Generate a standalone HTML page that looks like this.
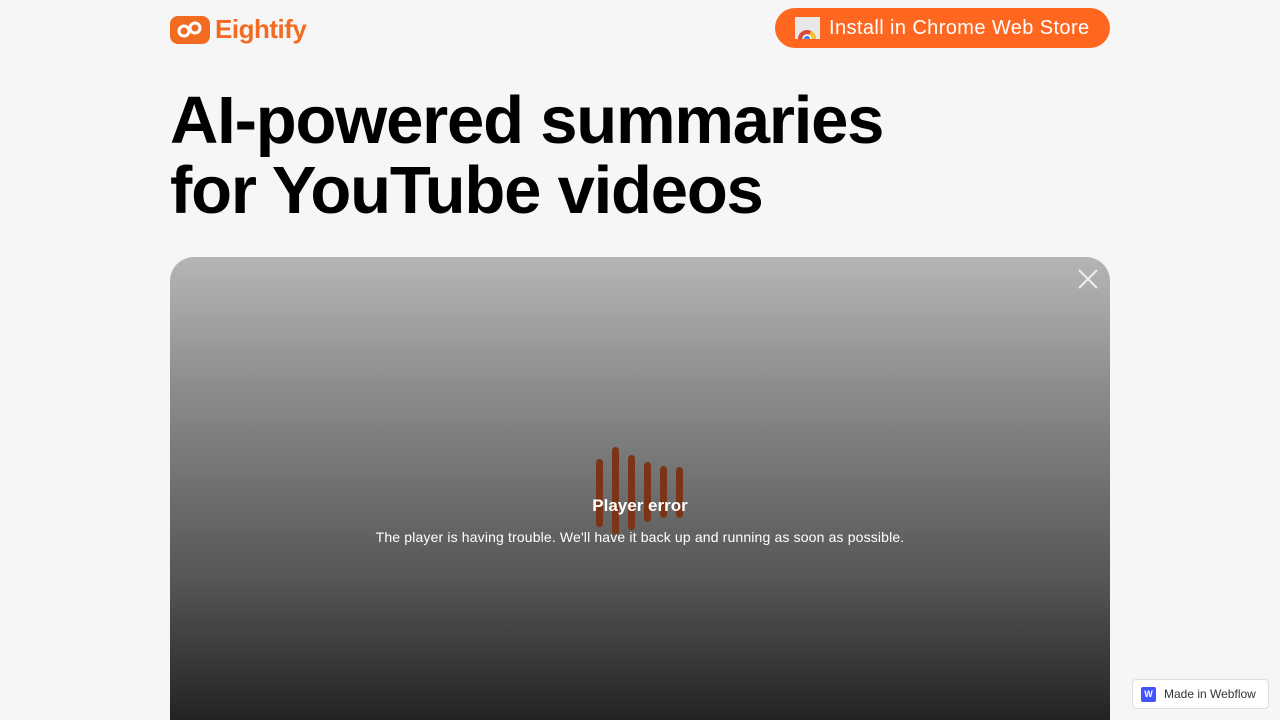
<!DOCTYPE html>
<html><head><meta charset="utf-8"><style>
*{margin:0;padding:0;box-sizing:border-box}
html,body{width:1280px;height:720px;overflow:hidden}
body{background:#f6f6f6;font-family:"Liberation Sans",sans-serif;position:relative}
.logo{position:absolute;left:170px;top:14px;display:flex;align-items:center}
.logo .ic{width:40px;height:28px;background:#f26b21;border-radius:8px;position:relative}
.logo span{color:#f26b21;font-weight:bold;font-size:26px;margin-left:5px;letter-spacing:-0.5px}
.btn{position:absolute;left:775px;top:8px;width:335px;height:40px;background:#ff6720;border-radius:20px;color:#fff;font-size:20px;letter-spacing:0.4px;display:flex;align-items:center;padding-left:20px}
.btn .si{width:25px;height:22px;background:#ddd;margin-right:9px;position:relative;overflow:hidden}
h1{position:absolute;left:170px;top:86px;font-size:67px;line-height:70px;font-weight:bold;color:#000;letter-spacing:-1.2px}
.video{position:absolute;left:170px;top:257px;width:940px;height:463px;border-radius:24px 24px 0 0;background:linear-gradient(#b5b5b5,#8a8a8a 30%,#555 70%,#232325);overflow:hidden}
.bar{position:absolute;width:7px;border-radius:4px;background:#7a3517}
.err{position:absolute;left:0;width:940px;text-align:center;color:#fff}
.x{position:absolute;right:12px;top:12px}
.wf{position:absolute;left:1132px;top:679px;width:137px;height:30px;background:#fff;border:1px solid #ddd;border-radius:4px;display:flex;align-items:center;padding-left:8px;font-size:12px;color:#333}
.wf b{width:15px;height:15px;background:#4353ff;border-radius:2px;color:#fff;font-size:9px;display:inline-flex;align-items:center;justify-content:center;margin-right:8px}
</style></head><body>
<div class="logo"><div class="ic"><svg width="40" height="28"><circle cx="14" cy="15" r="5" fill="none" stroke="#fff" stroke-width="3"/><circle cx="25" cy="12" r="5" fill="none" stroke="#fff" stroke-width="3"/></svg></div><span>Eightify</span></div>
<div class="btn"><div class="si"><svg width="25" height="22"><rect width="25" height="22" fill="#e8e8e8"/><circle cx="12" cy="22" r="9" fill="#dd4b39"/><path d="M12 22 L21 22 A9 9 0 0 0 16 14Z" fill="#fbc02d"/><path d="M12 22 L3 22 A9 9 0 0 0 7 30Z" fill="#4caf50"/><circle cx="12" cy="22" r="4" fill="#4285f4" stroke="#fff" stroke-width="1.5"/></svg></div>Install in Chrome Web Store</div>
<h1>AI-powered summaries<br>for YouTube videos</h1>
<div class="video">
<svg class="x" width="20" height="20"><path d="M1 1L19 19M19 1L1 19" stroke="#eee" stroke-width="2"/></svg>
<div class="bar" style="left:426px;top:202px;height:68px"></div>
<div class="bar" style="left:442px;top:190px;height:88px"></div>
<div class="bar" style="left:458px;top:198px;height:75px"></div>
<div class="bar" style="left:474px;top:205px;height:60px"></div>
<div class="bar" style="left:490px;top:209px;height:52px"></div>
<div class="bar" style="left:506px;top:210px;height:51px"></div>
<div class="err" style="top:239px;font-size:17px;font-weight:bold">Player error</div>
<div class="err" style="top:272px;font-size:14px;letter-spacing:0.15px">The player is having trouble. We'll have it back up and running as soon as possible.</div>
</div>
<div class="wf"><b>W</b>Made in Webflow</div>
</body></html>
